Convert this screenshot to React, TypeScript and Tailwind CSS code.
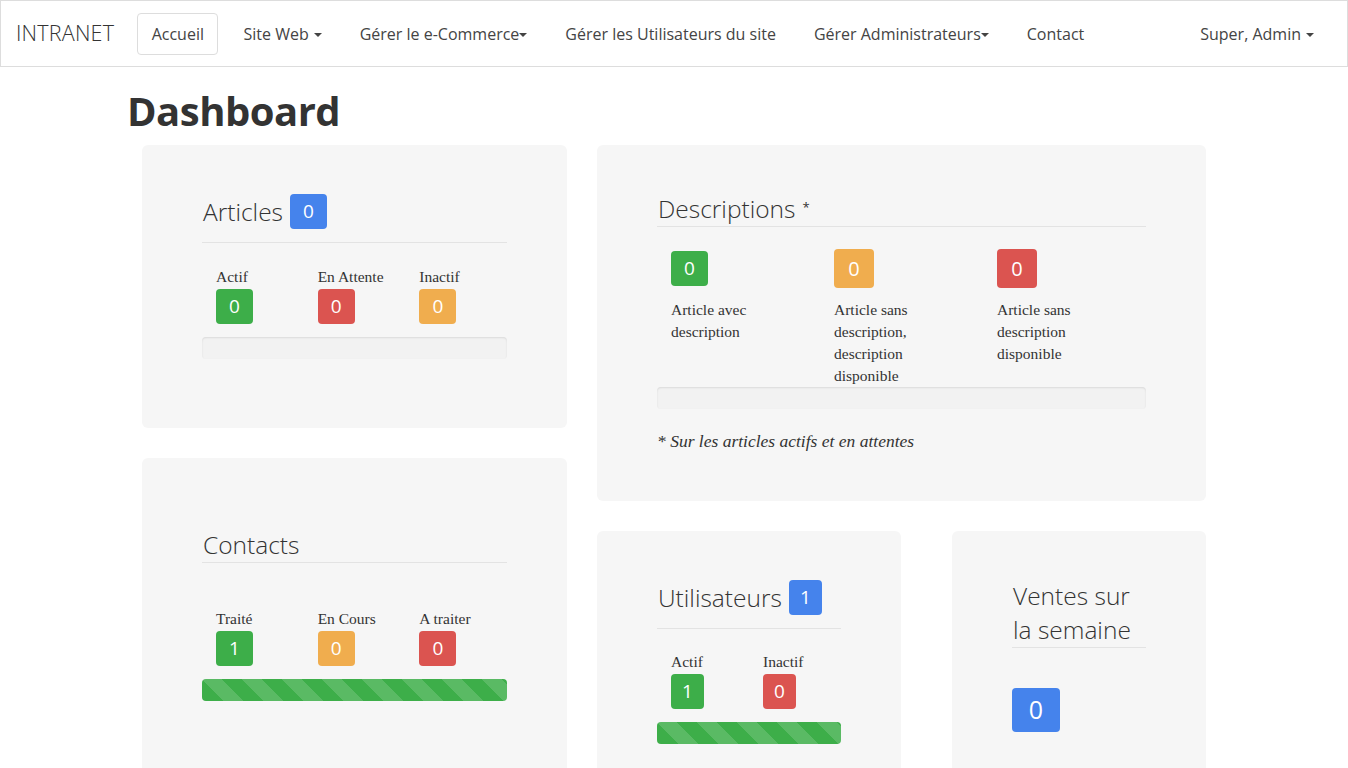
import React from 'react';

const sans = "font-['Open_Sans',sans-serif]";
const serif = "font-['Liberation_Serif',serif]";

const Caret = () => (
  <span className="ml-[5px] inline-block h-0 w-0 border-x-[4px] border-t-[4px] border-x-transparent border-t-[#444] align-middle" />
);

const Badge = ({ value, color, size = 'md' }: { value: string; color: string; size?: 'sm' | 'md' | 'lg' | 'xl' }) => {
  const sizes = {
    sm: 'h-[35px] w-[33px] text-[19px]',
    md: 'h-[35px] w-[37px] text-[19px]',
    lg: 'h-[39px] w-[40px] text-[20px]',
    xl: 'h-[44px] w-[48px] text-[25px]',
  };
  return (
    <span className={`${sizes[size]} ${color} ${sans} flex items-center justify-center rounded-[4px] font-normal text-white`}>
      {value}
    </span>
  );
};

const green = 'bg-[#3dae49]';
const red = 'bg-[#db5450]';
const orange = 'bg-[#f0ad4e]';
const blue = 'bg-[#4583ec]';

const EmptyBar = () => (
  <div className="h-[22px] rounded-[4px] bg-[#f2f2f2] shadow-[inset_0_1px_2px_rgba(0,0,0,0.1)]" />
);

const StripedBar = () => (
  <div className="h-[22px] rounded-[4px] bg-[#3dae49] bg-[linear-gradient(45deg,rgba(255,255,255,.15)_25%,transparent_25%,transparent_50%,rgba(255,255,255,.15)_50%,rgba(255,255,255,.15)_75%,transparent_75%,transparent)] bg-[length:40px_40px]" />
);

const StatCol = ({ label, value, color, size = 'md' }: { label: string; value: string; color: string; size?: 'sm' | 'md' }) => (
  <div className="pl-[14px]">
    <div className={`${serif} h-[20px] text-[15.5px] leading-[20px] text-[#333]`}>{label}</div>
    <div className="mt-[2px]">
      <Badge value={value} color={color} size={size} />
    </div>
  </div>
);

const navItems = [
  { label: 'Site Web', caret: 'space' },
  { label: 'Gérer le e-Commerce', caret: 'tight' },
  { label: 'Gérer les Utilisateurs du site', caret: '' },
  { label: 'Gérer Administrateurs', caret: 'tight' },
  { label: 'Contact', caret: '' },
];

export default function App() {
  return (
    <div className={`${sans} min-h-screen bg-white text-[#333]`}>
      <nav className="flex h-[67px] items-center border border-[#dddddd] bg-white pl-[15px] pr-[33px] text-[16px] text-[#444]">
        <span className="mr-[23px] text-[21.5px] font-light tracking-[0.2px] text-[#333]">INTRANET</span>
        <ul className="flex items-center gap-[12px]">
          <li className="rounded-[4px] border border-[#dddddd] px-[13.5px] py-[8px]">Accueil</li>
          {navItems.map((item) => (
            <li key={item.label} className="px-[13px] py-[9px]">
              {item.label}
              {item.caret === 'space' && <Caret />}
              {item.caret === 'tight' && (
                <span className="inline-block h-0 w-0 border-x-[4px] border-t-[4px] border-x-transparent border-t-[#444] align-middle" />
              )}
            </li>
          ))}
        </ul>
        <div className="ml-auto">
          Super, Admin
          <Caret />
        </div>
      </nav>

      <div className="mx-auto w-[1094px]">
        <h1 className="mt-[21px] text-[40px] font-bold leading-[46px] tracking-[-0.5px] text-[#333]">Dashboard</h1>

        <div className="mt-[11px] flex gap-[30px] px-[15px]">
          {/* left column */}
          <div className="flex w-[426px] flex-col gap-[30px]">
            <div className="h-[283px] rounded-[6px] bg-[#f6f6f6] px-[60px] pt-[49px]">
              <div className="flex items-center gap-[7px] border-b border-[#e3e3e3] pb-[13px] pl-[1px]">
                <span className="text-[24.5px] font-light leading-[34px]">Articles</span>
                <Badge value="0" color={blue} />
              </div>
              <div className="mt-[24px] grid grid-cols-3">
                <StatCol label="Actif" value="0" color={green} />
                <StatCol label="En Attente" value="0" color={red} />
                <StatCol label="Inactif" value="0" color={orange} />
              </div>
              <div className="mt-[13px]">
                <EmptyBar />
              </div>
            </div>

            <div className="h-[330px] rounded-[6px] bg-[#f6f6f6] px-[60px] pt-[72px]">
              <div className="border-b border-[#e3e3e3] pb-[2px] pl-[1px]">
                <span className="text-[24.5px] font-light leading-[30px]">Contacts</span>
              </div>
              <div className="mt-[46px] grid grid-cols-3">
                <StatCol label="Traité" value="1" color={green} />
                <StatCol label="En Cours" value="0" color={orange} />
                <StatCol label="A traiter" value="0" color={red} />
              </div>
              <div className="mt-[13px]">
                <StripedBar />
              </div>
            </div>
          </div>

          {/* right column */}
          <div className="flex w-[609px] flex-col gap-[30px]">
            <div className="h-[356px] rounded-[6px] bg-[#f6f6f6] px-[60px] pt-[49px]">
              <div className="border-b border-[#e3e3e3] pb-[2px] pl-[1px]">
                <span className="text-[24.5px] font-light leading-[30px]">Descriptions</span>
                <sup className="ml-[7px] text-[13px]">*</sup>
              </div>
              <div className="mt-[22px] grid grid-cols-3">
                {[
                  { v: '0', c: green, s: 'md' as const, t: 'Article avec description' },
                  { v: '0', c: orange, s: 'lg' as const, t: 'Article sans description, description disponible' },
                  { v: '0', c: red, s: 'lg' as const, t: 'Article sans description disponible' },
                ].map((d, i) => (
                  <div key={i} className="pl-[14px]">
                    <div className="flex h-[39px] items-center">
                      <Badge value={d.v} color={d.c} size={d.s} />
                    </div>
                    <p className={`${serif} mt-[11px] w-[100px] text-[15.5px] leading-[22px] text-[#333]`}>{d.t}</p>
                  </div>
                ))}
              </div>
              <EmptyBar />
              <p className={`${serif} mt-[21px] text-[17.5px] italic leading-[22px] text-[#333]`}>
                * Sur les articles actifs et en attentes
              </p>
            </div>

            <div className="flex gap-[51px]">
              <div className="h-[260px] w-[304px] rounded-[6px] bg-[#f6f6f6] px-[60px] pt-[49px]">
                <div className="flex items-center gap-[7px] border-b border-[#e3e3e3] pb-[13px] pl-[1px]">
                  <span className="text-[24.5px] font-light leading-[34px]">Utilisateurs</span>
                  <Badge value="1" color={blue} size="sm" />
                </div>
                <div className="mt-[23px] grid grid-cols-2">
                  <StatCol label="Actif" value="1" color={green} size="sm" />
                  <StatCol label="Inactif" value="0" color={red} size="sm" />
                </div>
                <div className="mt-[13px]">
                  <StripedBar />
                </div>
              </div>

              <div className="h-[260px] w-[254px] rounded-[6px] bg-[#f6f6f6] px-[60px] pt-[48px]">
                <div className="border-b border-[#e3e3e3] pl-[1px]">
                  <div className="w-[130px] text-[24.5px] font-light leading-[34px]">Ventes sur la semaine</div>
                </div>
                <div className="mt-[40px]">
                  <Badge value="0" color={blue} size="xl" />
                </div>
              </div>
            </div>
          </div>
        </div>
      </div>
    </div>
  );
}
